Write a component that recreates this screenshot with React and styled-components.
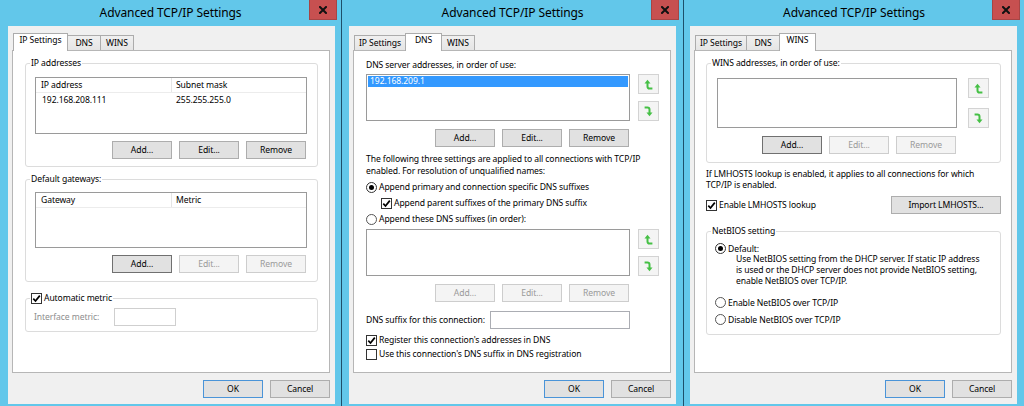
import React from "react";
import styled, { createGlobalStyle } from "styled-components";

const GlobalStyle = createGlobalStyle`
  html, body {
    margin: 0;
    padding: 0;
  }
  body {
    font-family: "Noto Sans", "Open Sans", sans-serif;
    font-size: 8.6px;
    letter-spacing: -0.1px;
    color: #000;
  }
  * {
    box-sizing: border-box;
  }
`;

const Screen = styled.div`
  display: flex;
  gap: 1px;
  width: 1024px;
  height: 406px;
  background: #1d4f6a;
  overflow: hidden;
`;

const Window = styled.section`
  flex: 0 0 ${({ $w }) => $w}px;
  display: flex;
  flex-direction: column;
  background: #62c7ea;
`;

const TitleBar = styled.header`
  flex: 0 0 25px;
  display: grid;
  grid-template-columns: 32px 1fr 32px;
`;

const Title = styled.h1`
  grid-column: 2;
  margin: 0;
  font-size: 12px;
  font-weight: 400;
  letter-spacing: -0.1px;
  line-height: 26px;
  text-align: center;
  white-space: nowrap;
`;

const CloseButton = styled.button`
  width: 28px;
  height: 20px;
  padding: 0;
  border: 1px solid #a64545;
  border-top: none;
  background: #c75050;
  display: flex;
  align-items: center;
  justify-content: center;
`;

const Body = styled.div`
  flex: 1;
  margin: 0 ${({ $r }) => $r}px 2px ${({ $l }) => $l}px;
  padding: 7px 0 0 4px;
  background: #f0f0f0;
`;

const TabStrip = styled.div`
  display: flex;
  align-items: flex-end;
  height: 17px;
  padding-left: 1px;
`;

const Tab = styled.div`
  position: relative;
  z-index: ${({ $active }) => ($active ? 1 : 0)};
  width: ${({ $w, $active }) => $w + ($active ? 3 : 0)}px;
  height: ${({ $active }) => ($active ? 18 : 15)}px;
  margin-bottom: ${({ $active }) => ($active ? -1 : 0)}px;
  margin-left: -1px;
  border: 1px solid #acacac;
  border-bottom: none;
  background: ${({ $active }) =>
    $active ? "#fff" : "linear-gradient(#f0f0f0, #e5e5e5)"};
  text-align: center;
  line-height: ${({ $active }) => ($active ? 13 : 14)}px;
  white-space: nowrap;

  &:first-child {
    margin-left: 0;
  }
`;

const Panel = styled.div`
  width: 318px;
  height: 323px;
  border: 1px solid #b6b6b6;
  background: #fff;
  padding: ${({ $pad }) => $pad};
  display: flex;
  flex-direction: column;
`;

const Footer = styled.div`
  width: 318px;
  display: flex;
  justify-content: flex-end;
  gap: 7px;
  margin-top: 7px;
`;

const Button = styled.button`
  flex: 0 0 ${({ $w }) => $w || 60}px;
  height: 18px;
  padding: 0;
  font: inherit;
  letter-spacing: inherit;
  color: ${({ disabled }) => (disabled ? "#9a9a9a" : "#000")};
  background: ${({ disabled }) => (disabled ? "#f4f4f4" : "#e1e1e1")};
  border: 1px solid
    ${({ disabled, $default, $focus }) =>
      disabled ? "#cdcdcd" : $default ? "#4a94d8" : $focus ? "#707070" : "#adadad"};
`;

const ButtonRow = styled.div`
  display: flex;
  justify-content: flex-end;
  gap: 7px;
  margin-top: ${({ $mt }) => $mt ?? 7}px;
  padding-right: ${({ $inset }) => $inset || 0}px;
`;

const GroupBox = styled.fieldset`
  margin: ${({ $mt }) => $mt || 0}px 0 0;
  padding: 0;
  min-width: 0;
  border: 1px solid #dcdcdc;
  border-radius: 3px;
`;

const Legend = styled.legend`
  margin-left: 4px;
  padding: 0 1px;
  line-height: 12px;
  display: flex;
  align-items: center;
`;

const GroupBody = styled.div`
  padding: ${({ $pad }) => $pad};
  display: flex;
  flex-direction: column;
`;

const ListView = styled.div`
  height: ${({ $h }) => $h}px;
  border: 1px solid #9a9a9a;
  background: #fff;
`;

const ListGrid = styled.div`
  display: grid;
  grid-template-columns: 136px 1fr;
  height: ${({ $head }) => ($head ? 15 : 14)}px;
  border-bottom: 1px solid ${({ $head }) => ($head ? "#ececec" : "transparent")};
`;

const Cell = styled.div`
  padding-left: ${({ $head }) => ($head ? 5 : 6)}px;
  line-height: 14px;
  border-right: 1px solid ${({ $head }) => ($head ? "#e5e5e5" : "transparent")};
  white-space: nowrap;

  &:last-child {
    padding-left: 4px;
    border-right: none;
  }
`;

const ListWithArrows = styled.div`
  display: flex;
  gap: ${({ $gap }) => $gap}px;
  margin-top: ${({ $mt }) => $mt || 0}px;
`;

const ListBox = styled.div`
  flex: 1;
  height: ${({ $h }) => $h}px;
  border: 1px solid #9a9a9a;
  background: #fff;
  padding: 1px;
`;

const ListItem = styled.div`
  height: 11px;
  line-height: 11px;
  padding-left: 2px;
  background: ${({ $selected }) => ($selected ? "#3399ff" : "transparent")};
  color: ${({ $selected }) => ($selected ? "#fff" : "#000")};
`;

const ArrowColumn = styled.div`
  flex: 0 0 21px;
  display: flex;
  flex-direction: column;
  justify-content: space-between;
`;

const ArrowButton = styled.button`
  width: 21px;
  height: 20px;
  padding: 0;
  border: 1px solid #d3d3d3;
  background: #f4f4f4;
  display: flex;
  align-items: center;
  justify-content: center;
`;

const Option = styled.label`
  display: flex;
  align-items: center;
  gap: 2px;
  height: ${({ $h }) => $h || 14}px;
  padding-left: ${({ $indent }) => $indent || 0}px;
  margin-top: ${({ $mt }) => $mt || 0}px;
  white-space: nowrap;
`;

const CheckMark = styled.span`
  flex: 0 0 11px;
  height: 11px;
  border: 1px solid #333;
  background: #fff;
  display: flex;
  align-items: center;
  justify-content: center;
`;

const RadioMark = styled.span`
  flex: 0 0 11px;
  height: 11px;
  border-radius: 50%;
  border: 1px solid ${({ $on }) => ($on ? "#333" : "#555")};
  background: #fff;
  display: flex;
  align-items: center;
  justify-content: center;
`;

const Dot = styled.span`
  width: 5px;
  height: 5px;
  border-radius: 50%;
  background: #000;
`;

const Text = styled.p`
  margin: ${({ $mt }) => $mt || 0}px 0 0;
  padding-left: ${({ $indent }) => $indent || 0}px;
  line-height: ${({ $lh }) => $lh || 12}px;
  color: ${({ $muted }) => ($muted ? "#8e8e8e" : "#000")};
  white-space: nowrap;
`;

const FieldRow = styled.div`
  display: flex;
  align-items: center;
  justify-content: ${({ $spread }) => ($spread ? "space-between" : "flex-start")};
  margin-top: ${({ $mt }) => $mt || 0}px;
  padding-right: ${({ $inset }) => $inset || 0}px;
`;

const FieldLabel = styled.span`
  flex: 0 0 ${({ $w }) => ($w ? `${$w}px` : "auto")};
  color: ${({ $muted }) => ($muted ? "#8e8e8e" : "#000")};
  white-space: nowrap;
`;

const TextBox = styled.input`
  width: ${({ $w }) => $w}px;
  height: 18px;
  padding: 0 2px;
  font: inherit;
  border: 1px solid ${({ disabled }) => (disabled ? "#cfcfcf" : "#abadb3")};
  background: #fff;
  outline: none;
`;

const CloseIcon = () => (
  <svg width="8" height="8" viewBox="0 0 8 8">
    <path d="M1 1 L7 7 M7 1 L1 7" stroke="#111" strokeWidth="2" strokeLinecap="square" />
  </svg>
);

const CheckIcon = () => (
  <svg width="9" height="9" viewBox="0 0 9 9">
    <path d="M1.3 4.6 L3.5 7 L7.8 1.6" stroke="#000" strokeWidth="1.7" fill="none" />
  </svg>
);

const UpIcon = () => (
  <svg width="9" height="11" viewBox="0 0 9 11">
    <path d="M0.5 4.6 L3.5 0.8 L6.5 4.6 Z" fill="#45c045" />
    <path d="M3.5 4 V7.5 Q3.5 9.6 5.6 9.6 H8.4" stroke="#45c045" strokeWidth="2" fill="none" />
  </svg>
);

const DownIcon = () => (
  <svg width="9" height="11" viewBox="0 0 9 11">
    <path d="M0.6 1.4 H3.4 Q5.5 1.4 5.5 3.5 V7" stroke="#45c045" strokeWidth="2" fill="none" />
    <path d="M2.5 6.4 L5.5 10.2 L8.5 6.4 Z" fill="#45c045" />
  </svg>
);

const Check = ({ on, children, ...rest }) => (
  <Option {...rest}>
    <CheckMark>{on && <CheckIcon />}</CheckMark>
    {children}
  </Option>
);

const Radio = ({ on, children, ...rest }) => (
  <Option {...rest}>
    <RadioMark $on={on}>{on && <Dot />}</RadioMark>
    {children}
  </Option>
);

const Arrows = () => (
  <ArrowColumn>
    <ArrowButton>
      <UpIcon />
    </ArrowButton>
    <ArrowButton>
      <DownIcon />
    </ArrowButton>
  </ArrowColumn>
);

const tabs = [
  { id: "ip", label: "IP Settings", w: 52 },
  { id: "dns", label: "DNS", w: 34 },
  { id: "wins", label: "WINS", w: 34 },
];

const Dialog = ({ active, w, l, r, children }) => (
  <Window $w={w}>
    <TitleBar>
      <Title>Advanced TCP/IP Settings</Title>
      <CloseButton>
        <CloseIcon />
      </CloseButton>
    </TitleBar>
    <Body $l={l} $r={r}>
      <TabStrip>
        {tabs.map((t) => (
          <Tab key={t.id} $w={t.w} $active={t.id === active}>
            {t.label}
          </Tab>
        ))}
      </TabStrip>
      {children}
      <Footer>
        <Button $default>OK</Button>
        <Button>Cancel</Button>
      </Footer>
    </Body>
  </Window>
);

const IpSettings = () => (
  <Panel $pad="6px 11px 0 12px">
    <GroupBox>
      <Legend>IP addresses</Legend>
      <GroupBody $pad="8px 10px 7px 9px">
        <ListView $h={57}>
          <ListGrid $head>
            <Cell $head>IP address</Cell>
            <Cell $head>Subnet mask</Cell>
          </ListGrid>
          <ListGrid>
            <Cell>192.168.208.111</Cell>
            <Cell>255.255.255.0</Cell>
          </ListGrid>
        </ListView>
        <ButtonRow $inset={1}>
          <Button>Add...</Button>
          <Button>Edit...</Button>
          <Button>Remove</Button>
        </ButtonRow>
      </GroupBody>
    </GroupBox>
    <GroupBox $mt={6}>
      <Legend>Default gateways:</Legend>
      <GroupBody $pad="7px 10px 8px 9px">
        <ListView $h={56}>
          <ListGrid $head>
            <Cell $head>Gateway</Cell>
            <Cell $head>Metric</Cell>
          </ListGrid>
        </ListView>
        <ButtonRow $inset={1}>
          <Button $focus>Add...</Button>
          <Button disabled>Edit...</Button>
          <Button disabled>Remove</Button>
        </ButtonRow>
      </GroupBody>
    </GroupBox>
    <GroupBox $mt={10}>
      <Legend>
        <Check on $h={12}>Automatic metric</Check>
      </Legend>
      <GroupBody $pad="4px 10px 5px 8px">
        <FieldRow>
          <FieldLabel $w={80} $muted>
            Interface metric:
          </FieldLabel>
          <TextBox $w={62} disabled />
        </FieldRow>
      </GroupBody>
    </GroupBox>
  </Panel>
);

const DnsSettings = () => (
  <Panel $pad="8px 11px 0 12px">
    <Text>DNS server addresses, in order of use:</Text>
    <ListWithArrows $gap={8} $mt={3}>
      <ListBox $h={47}>
        <ListItem $selected>192.168.209.1</ListItem>
      </ListBox>
      <Arrows />
    </ListWithArrows>
    <ButtonRow $mt={8} $inset={30}>
      <Button>Add...</Button>
      <Button>Edit...</Button>
      <Button>Remove</Button>
    </ButtonRow>
    <Text $mt={6}>
      The following three settings are applied to all connections with TCP/IP
      <br />
      enabled. For resolution of unqualified names:
    </Text>
    <Radio on $h={16} $mt={2}>
      Append primary and connection specific DNS suffixes
    </Radio>
    <Check on $h={16} $indent={15}>
      Append parent suffixes of the primary DNS suffix
    </Check>
    <Radio $h={16}>Append these DNS suffixes (in order):</Radio>
    <ListWithArrows $gap={8} $mt={2}>
      <ListBox $h={47} />
      <Arrows />
    </ListWithArrows>
    <ButtonRow $mt={8} $inset={30}>
      <Button disabled>Add...</Button>
      <Button disabled>Edit...</Button>
      <Button disabled>Remove</Button>
    </ButtonRow>
    <FieldRow $spread $mt={9} $inset={29}>
      <FieldLabel>DNS suffix for this connection:</FieldLabel>
      <TextBox $w={140} />
    </FieldRow>
    <Check on $mt={4}>
      Register this connection's addresses in DNS
    </Check>
    <Check>Use this connection's DNS suffix in DNS registration</Check>
  </Panel>
);

const WinsSettings = () => (
  <Panel $pad="6px 10px 0 11px">
    <GroupBox>
      <Legend>WINS addresses, in order of use:</Legend>
      <GroupBody $pad="9px 11px 8px 10px">
        <ListWithArrows $gap={11}>
          <ListBox $h={50} />
          <Arrows />
        </ListWithArrows>
        <ButtonRow $mt={8} $inset={33}>
          <Button $focus>Add...</Button>
          <Button disabled>Edit...</Button>
          <Button disabled>Remove</Button>
        </ButtonRow>
      </GroupBody>
    </GroupBox>
    <Text $mt={6} $lh={11}>
      If LMHOSTS lookup is enabled, it applies to all connections for which
      <br />
      TCP/IP is enabled.
    </Text>
    <FieldRow $spread $mt={5}>
      <Check on $h={18}>
        Enable LMHOSTS lookup
      </Check>
      <Button $w={110}>Import LMHOSTS...</Button>
    </FieldRow>
    <GroupBox $mt={11}>
      <Legend>NetBIOS setting</Legend>
      <GroupBody $pad="6px 10px 9px 8px">
        <Radio on $h={11}>
          Default:
        </Radio>
        <Text $lh={11} $indent={21}>
          Use NetBIOS setting from the DHCP server. If static IP address
          <br />
          is used or the DHCP server does not provide NetBIOS setting,
          <br />
          enable NetBIOS over TCP/IP.
        </Text>
        <Radio $h={11} $mt={10}>
          Enable NetBIOS over TCP/IP
        </Radio>
        <Radio $h={11} $mt={6}>
          Disable NetBIOS over TCP/IP
        </Radio>
      </GroupBody>
    </GroupBox>
  </Panel>
);

const App = () => (
  <>
    <GlobalStyle />
    <Screen>
      <Dialog active="ip" w={341} l={8} r={6}>
        <IpSettings />
      </Dialog>
      <Dialog active="dns" w={341} l={7} r={7}>
        <DnsSettings />
      </Dialog>
      <Dialog active="wins" w={340} l={6} r={7}>
        <WinsSettings />
      </Dialog>
    </Screen>
  </>
);

export default App;
